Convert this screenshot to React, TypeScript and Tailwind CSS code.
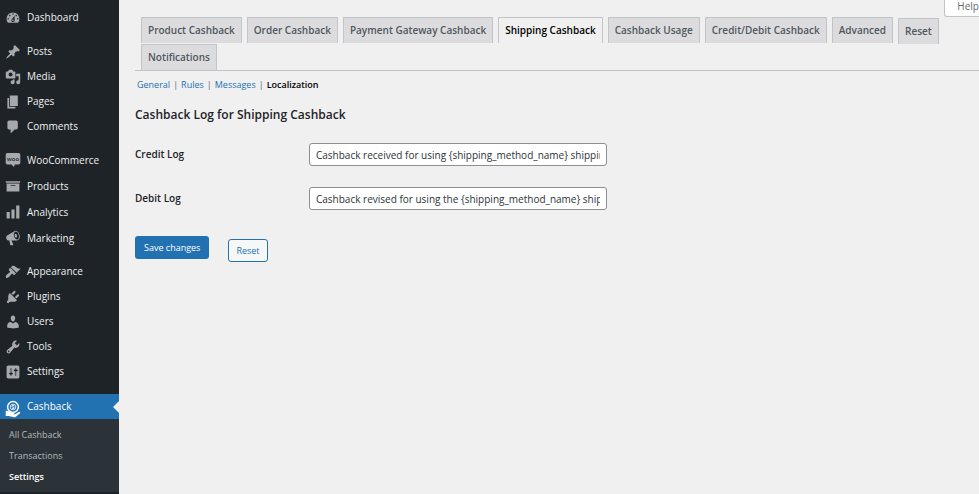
import { FC, ReactNode } from 'react';

type MenuEntry = {
  label: string;
  icon: ReactNode;
};

type MenuGroupProps = {
  entries: MenuEntry[];
  rowClass: string;
};

type LogFieldProps = {
  id: string;
  label: string;
  value: string;
};

const Dashicon: FC<{ d: string }> = ({ d }) => (
  <svg viewBox="0 0 20 20" className="size-4 shrink-0 fill-[#a7aaad]" aria-hidden="true">
    <path d={d} />
  </svg>
);

const WooIcon: FC = () => (
  <svg viewBox="0 0 16 16" className="size-4 shrink-0" aria-hidden="true">
    <path
      fill="#a7aaad"
      d="M2.5 1h11A1.8 1.8 0 0 1 15.300 2.800v8A1.800 1.800 0 0 1 13.500 12.600H9.800L9 15l-2.600-2.400H2.500A1.800 1.800 0 0 1 .7 10.800v-8A1.800 1.800 0 0 1 2.500 1z"
    />
    <text x="8" y="9" textAnchor="middle" fontSize="6" fontWeight="700" fill="#3c4146">
      woo
    </text>
  </svg>
);

const CashbackIcon: FC = () => (
  <svg viewBox="0 0 16 18" className="mt-1 h-[18px] w-4 shrink-0" fill="none" stroke="#fff" aria-hidden="true">
    <circle cx="8" cy="7" r="5.400" strokeWidth="1.500" />
    <circle cx="8" cy="7" r="2.800" strokeWidth=".8" />
    <path strokeWidth="1" d="M9.200 5.800c-.8-.7-2.300-.5-2.300.4 0 1.200 2.300.5 2.300 1.700 0 .9-1.600 1-2.400.3" />
    <path
      fill="#fff"
      stroke="none"
      d="M.7 10.800h2.400l3 1.800h2.700c1 0 1 1.300 0 1.300H6.800l3.200.4 3.800-2.300c1-.5 2 .5 1.200 1.300L10.800 16.800c-.5.4-1 .5-1.600.4L3.600 15.900.7 16.100z"
    />
  </svg>
);

const topEntries: MenuEntry[] = [
  {
    label: 'Dashboard',
    icon: (
      <Dashicon d="M3.760 16h12.480c1.100-1.370 1.760-3.110 1.760-5 0-4.420-3.580-8-8-8s-8 3.580-8 8c0 1.890.66 3.630 1.760 5zM10 4c.55 0 1 .45 1 1s-.45 1-1 1-1-.45-1-1 .45-1 1-1zM6 6c.55 0 1 .45 1 1s-.45 1-1 1-1-.45-1-1 .45-1 1-1zm8 0c.55 0 1 .45 1 1s-.45 1-1 1-1-.45-1-1 .45-1 1-1zm-5.370 5.550L12 7v6c0 1.100-.9 2-2 2s-2-.9-2-2c0-.57.24-1.080.63-1.450zM4 10c.55 0 1 .45 1 1s-.45 1-1 1-1-.45-1-1 .45-1 1-1zm12 0c.55 0 1 .45 1 1s-.45 1-1 1-1-.45-1-1 .45-1 1-1zm-5 3c0-.55-.45-1-1-1s-1 .45-1 1 .45 1 1 1 1-.45 1-1z" />
    ),
  },
];

const contentEntries: MenuEntry[] = [
  {
    label: 'Posts',
    icon: (
      <Dashicon d="M10.440 3.020l1.820-1.820 6.360 6.350-1.830 1.820c-1.050-.68-2.480-.57-3.410.36l-.75.75c-.92.93-1.040 2.350-.35 3.410l-1.830 1.820-2.410-2.410-2.800 2.790c-.42.42-3.380 2.710-3.800 2.290s1.860-3.390 2.280-3.810l2.790-2.790L4.100 9.360l1.830-1.820c1.050.69 2.480.57 3.400-.36l.75-.75c.93-.92 1.050-2.350.36-3.410z" />
    ),
  },
  {
    label: 'Media',
    icon: (
      <Dashicon d="M13 11V4c0-.55-.45-1-1-1h-1.670L9 1H5L3.670 3H2c-.55 0-1 .45-1 1v7c0 .55.45 1 1 1h10c.55 0 1-.45 1-1zM7 4.500c1.380 0 2.500 1.120 2.500 2.500S8.380 9.500 7 9.500 4.500 8.380 4.500 7 5.620 4.500 7 4.500zM14 6h5v10.500c0 1.380-1.120 2.500-2.500 2.500S14 17.880 14 16.500s1.120-2.500 2.500-2.500c.17 0 .34.02.5.05V9h-3V6zm-4 8.050V13h2v3.500c0 1.380-1.120 2.500-2.500 2.500S7 17.880 7 16.500 8.120 14 9.500 14c.17 0 .34.02.5.05z" />
    ),
  },
  { label: 'Pages', icon: <Dashicon d="M6 15V2h10v13H6zm-1 1h8v2H3V5h2v11z" /> },
  {
    label: 'Comments',
    icon: (
      <Dashicon d="M5 2h9c1.100 0 2 .9 2 2v7c0 1.100-.9 2-2 2h-2l-5 5v-5H5c-1.100 0-2-.9-2-2V4c0-1.100.9-2 2-2z" />
    ),
  },
];

const shopEntries: MenuEntry[] = [
  { label: 'WooCommerce', icon: <WooIcon /> },
  { label: 'Products', icon: <Dashicon d="M19 4v2H1V4h18zM2 7h16v10H2V7zm11 3V9H7v1h6z" /> },
  { label: 'Analytics', icon: <Dashicon d="M18 18V2h-4v16h4zm-6 0V7H8v11h4zm-6 0v-8H2v8h4z" /> },
  {
    label: 'Marketing',
    icon: (
      <Dashicon d="M18.150 5.940c.46 1.620.38 3.220-.02 4.480-.42 1.280-1.260 2.180-2.300 2.480-.16.06-.26.06-.4.06-.06.02-.12.02-.18.02-.06.02-.14.02-.22.02h-6.800l2.220 5.500c.02.14-.06.26-.14.34-.08.1-.24.16-.34.16H6.950c-.1 0-.26-.06-.34-.16-.08-.08-.16-.2-.14-.34l-1-5.500H4.250l-.02-.02c-.5.06-1.080-.18-1.540-.62s-.88-1.080-1.060-1.880c-.24-.8-.2-1.560-.02-2.200.18-.62.58-1.080 1.060-1.300l.02-.02 9-5.400c.1-.06.18-.1.24-.16.06-.04.14-.08.24-.12.16-.08.28-.12.5-.18 1.040-.3 2.240.1 3.220.98s1.840 2.240 2.260 3.860zm-2.580 5.980h-.02c.4-.1.74-.34 1.040-.7.58-.7.86-1.760.86-3.040 0-.64-.1-1.300-.28-1.980-.34-1.360-1.020-2.500-1.780-3.240s-1.680-1.100-2.460-.88c-.82.22-1.400.96-1.700 2-.32 1.040-.28 2.360.06 3.720.38 1.360 1 2.500 1.800 3.240.78.74 1.620 1.100 2.480.88zm-2.540-7.080c.22-.04.42-.02.62.04.38.16.76.48 1.020 1s.42 1.200.42 1.780c0 .3-.04.56-.12.8-.18.48-.44.84-.86.94-.34.1-.8-.06-1.140-.4s-.64-.86-.78-1.500c-.18-.62-.12-1.240.02-1.720s.48-.84.82-.94z" />
    ),
  },
];

const siteEntries: MenuEntry[] = [
  {
    label: 'Appearance',
    icon: (
      <Dashicon d="M14.480 11.060L7.410 3.990l1.500-1.500c.5-.56 2.300-.47 3.510.32 1.210.8 1.430 1.280 2.910 2.100 1.180.64 2.450 1.260 4.450.85zm-.71.71L6.700 4.700 4.930 6.470c-.39.39-.39 1.020 0 1.410l1.060 1.060c.39.39.39 1.030 0 1.420-.6.6-1.430 1.110-2.210 1.690-.35.26-.7.53-1.010.84C1.430 14.230.4 16.080 1.400 17.070c.99 1 2.840-.03 4.180-1.360.31-.31.58-.66.85-1.020.57-.78 1.080-1.610 1.690-2.210.39-.39 1.020-.39 1.410 0l1.060 1.060c.39.39 1.020.39 1.410 0z" />
    ),
  },
  {
    label: 'Plugins',
    icon: (
      <Dashicon d="M13.110 4.360L9.870 7.600 8 5.730l3.240-3.240c.35-.34 1.050-.2 1.560.32.52.51.66 1.210.31 1.550zm-8 1.770l.91-1.120 9.010 9.010-1.190.84c-.71.71-2.630 1.160-3.820 1.160H6.140L4.900 17.260c-.59.59-1.540.59-2.120 0-.59-.58-.59-1.530 0-2.120l1.240-1.240v-3.880c0-1.130.4-3.190 1.090-3.890zm7.260 3.970l3.240-3.240c.34-.35 1.040-.21 1.550.31.52.51.66 1.210.31 1.550l-3.240 3.250z" />
    ),
  },
  {
    label: 'Users',
    icon: (
      <Dashicon d="M10 9.250c-2.270 0-2.730-3.440-2.730-3.440C7 4.020 7.820 2 9.970 2c2.160 0 2.980 2.020 2.710 3.810 0 0-.41 3.440-2.680 3.440zm0 2.570L12.720 10c2.390 0 4.520 2.330 4.520 4.530v2.490s-3.650 1.130-7.240 1.130c-3.650 0-7.240-1.130-7.240-1.130v-2.490c0-2.250 1.940-4.480 4.470-4.480z" />
    ),
  },
  {
    label: 'Tools',
    icon: (
      <Dashicon d="M16.680 9.770c-1.340 1.340-3.300 1.670-4.950.99l-5.410 6.520c-.99.99-2.590.99-3.580 0s-.99-2.590 0-3.570l6.520-5.420c-.68-1.650-.35-3.610.99-4.950 1.280-1.280 3.120-1.620 4.720-1.060l-2.890 2.890 2.820 2.820 2.860-2.870c.53 1.580.18 3.390-1.080 4.650zM3.810 16.210c.4.39 1.040.39 1.430 0 .4-.4.4-1.040 0-1.430-.39-.4-1.030-.4-1.430 0-.39.39-.39 1.030 0 1.430z" />
    ),
  },
  {
    label: 'Settings',
    icon: (
      <Dashicon d="M18 16V4c0-1.100-.9-2-2-2H4c-1.100 0-2 .9-2 2v12c0 1.100.9 2 2 2h12c1.100 0 2-.9 2-2zM8 11h1c.55 0 1 .45 1 1s-.45 1-1 1H8v1.500c0 .28-.22.5-.5.5s-.5-.22-.5-.5V13H6c-.55 0-1-.45-1-1s.45-1 1-1h1V5.500c0-.28.22-.5.5-.5s.5.22.5.5V11zm5-2h-1c-.55 0-1-.45-1-1s.45-1 1-1h1V5.500c0-.28.22-.5.5-.5s.5.22.5.5V7h1c.55 0 1 .45 1 1s-.45 1-1 1h-1v5.500c0 .28-.22.5-.5.5s-.5-.22-.5-.5V9z" />
    ),
  },
];

const tabs = [
  'Product Cashback',
  'Order Cashback',
  'Payment Gateway Cashback',
  'Shipping Cashback',
  'Cashback Usage',
  'Credit/Debit Cashback',
  'Advanced',
  'Reset',
  'Notifications',
];

const sections = ['General', 'Rules', 'Messages', 'Localization'];

const MenuGroup: FC<MenuGroupProps> = ({ entries, rowClass }) => (
  <ul>
    {entries.map(({ label, icon }) => (
      <li key={label}>
        <a href="#" className={`flex items-center gap-[6px] pl-[5px] text-[#f0f0f1] ${rowClass}`}>
          {icon}
          {label}
        </a>
      </li>
    ))}
  </ul>
);

const Sidebar: FC = () => (
  <nav className="flex w-[119px] shrink-0 flex-col bg-[#1d2327] pt-[5px] text-[10px]">
    <MenuGroup entries={topEntries} rowClass="h-[25px]" />
    <div className="h-[9px]" />
    <MenuGroup entries={contentEntries} rowClass="h-[25px]" />
    <div className="h-2" />
    <MenuGroup entries={shopEntries} rowClass="h-[26px]" />
    <div className="h-2" />
    <MenuGroup entries={siteEntries} rowClass="h-[25px]" />
    <div className="h-[10px]" />
    <a
      href="#"
      className="relative flex h-[25px] items-center gap-[6px] bg-[#2271b1] pl-[5px] text-white"
    >
      <CashbackIcon />
      Cashback
      <span className="absolute top-1/2 right-0 -translate-y-1/2 border-y-6 border-r-6 border-y-transparent border-r-[#f0f0f1]" />
    </a>
    <ul className="bg-[#2c3338] py-[5px] text-[9px] text-[#b4b8bb]">
      {['All Cashback', 'Transactions', 'Settings'].map((label) => (
        <li key={label}>
          <a
            href="#"
            className={`flex h-[21px] items-center pl-[9px] ${label === 'Settings' ? 'font-semibold text-white' : ''}`}
          >
            {label}
          </a>
        </li>
      ))}
    </ul>
  </nav>
);

const LogField: FC<LogFieldProps> = ({ id, label, value }) => (
  <div className="flex items-center">
    <label htmlFor={id} className="w-[174px] shrink-0 font-semibold text-[#1d2327]">
      {label}
    </label>
    <input
      id={id}
      type="text"
      defaultValue={value}
      className="h-[23px] w-[298px] rounded-[3px] border border-[#8c8f94] bg-white px-[6px] text-[#2c3338]"
    />
  </div>
);

const App: FC = () => (
  <div className="flex min-h-screen bg-[#f0f0f1] font-['Open_Sans','Noto_Sans',sans-serif] text-[10px]">
    <Sidebar />
    <main className="min-w-0 flex-1 pl-4">
      <div className="flex h-[17px] justify-end">
        <button
          type="button"
          className="flex items-center rounded-bl-[3px] border-b border-l border-[#c3c4c7] bg-white pb-1 pl-3 text-[10px] text-[#646970]"
        >
          Help
        </button>
      </div>
      <nav className="flex flex-wrap gap-x-[5px] border-b border-[#c3c4c7] pl-[6px]">
        {tabs.map((tab) => (
          <a
            key={tab}
            href="#"
            className={`flex h-[26px] items-center border border-b-0 border-[#c3c4c7] px-[6px] font-semibold ${
              tab === 'Shipping Cashback' ? 'bg-[#f0f0f1] text-black' : 'bg-[#dcdcde] text-[#50575e]'
            } ${tab === 'Reset' ? 'mt-px' : ''}`}
          >
            {tab}
          </a>
        ))}
      </nav>
      <ul className="mt-[6px] flex h-4 items-center pl-[2px] text-[9px] text-[#646970]">
        {sections.map((section, index) => (
          <li key={section}>
            {index > 0 && <span className="px-[3px]">|</span>}
            <a
              href="#"
              className={section === 'Localization' ? 'font-semibold text-black' : 'text-[#2271b1]'}
            >
              {section}
            </a>
          </li>
        ))}
      </ul>
      <h2 className="mt-3 text-[12px] leading-5 font-semibold text-[#1d2327]">
        Cashback Log for Shipping Cashback
      </h2>
      <form>
        <div className="mt-[18px] flex flex-col gap-[21px]">
          <LogField
            id="credit-log"
            label="Credit Log"
            value="Cashback received for using {shipping_method_name} shipping method"
          />
          <LogField
            id="debit-log"
            label="Debit Log"
            value="Cashback revised for using the {shipping_method_name} shipping method"
          />
        </div>
        <div className="mt-[26px] flex items-start gap-[19px] text-[9px]">
          <button type="button" className="h-[23px] rounded-[3px] bg-[#2271b1] px-[9px] text-white">
            Save changes
          </button>
          <button
            type="reset"
            className="mt-[3px] h-[23px] rounded-[3px] border border-[#2271b1] bg-[#f6f7f7] px-[7px] text-[#2271b1]"
          >
            Reset
          </button>
        </div>
      </form>
    </main>
  </div>
);

export default App;
